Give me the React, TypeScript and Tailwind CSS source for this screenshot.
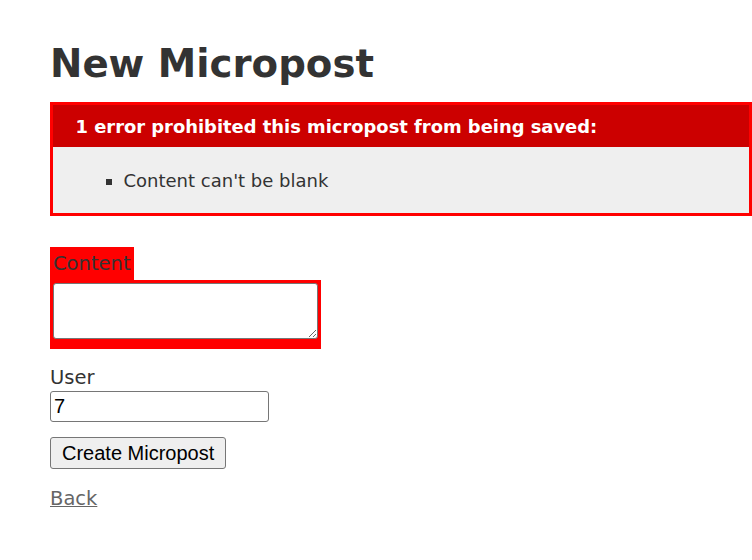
import type { FC } from "react";

const font = "font-['DejaVu_Sans',Verdana,sans-serif]";

const App: FC = () => {
  return (
    <div className={`min-h-[560px] bg-white px-[50px] pt-[42px] text-[#333] ${font}`}>
      <h1 className="mb-[16px] text-[38.7px] font-bold leading-[44px]">New Micropost</h1>

      <div className="mb-[31px] w-[702px] border-[3px] border-[#f00] bg-[#efefef]">
        <h2 className="bg-[#c00] py-[7.5px] pl-[22.5px] text-[17.9px] font-bold leading-[27px] text-white">
          1 error prohibited this micropost from being saved:
        </h2>
        <ul className="ml-[10.5px] list-[square] py-[19.5px] pl-[60px] text-[18px] leading-[27px]">
          <li>Content can't be blank</li>
        </ul>
      </div>

      <form className="flex flex-col items-start text-[19.5px] leading-[27px]">
        <div className="bg-[#f00] p-[3px]">
          <label htmlFor="content">Content</label>
        </div>
        <div className="bg-[#f00] px-[3px] pb-[10px] pt-[3px]">
          <textarea
            id="content"
            className="block h-[56px] w-[265px] rounded-[3px] border border-[#767676] bg-white"
          />
        </div>

        <label htmlFor="user" className="mt-[15px]">
          User
        </label>
        <input
          id="user"
          defaultValue="7"
          className="h-[31px] w-[219px] rounded-[3px] border border-[#767676] px-[3px] font-['Liberation_Sans',Arial,sans-serif] text-[20px] text-black"
        />

        <button
          type="button"
          className="mt-[15px] h-[32px] rounded-[3px] border border-[#767676] bg-[#efefef] px-[11px] font-['Liberation_Sans',Arial,sans-serif] text-[20px] leading-[24px] text-black"
        >
          Create Micropost
        </button>
      </form>

      <a href="#" className="mt-[16px] inline-block text-[19.5px] leading-[27px] text-[#666] underline">
        Back
      </a>
    </div>
  );
};

export default App;
